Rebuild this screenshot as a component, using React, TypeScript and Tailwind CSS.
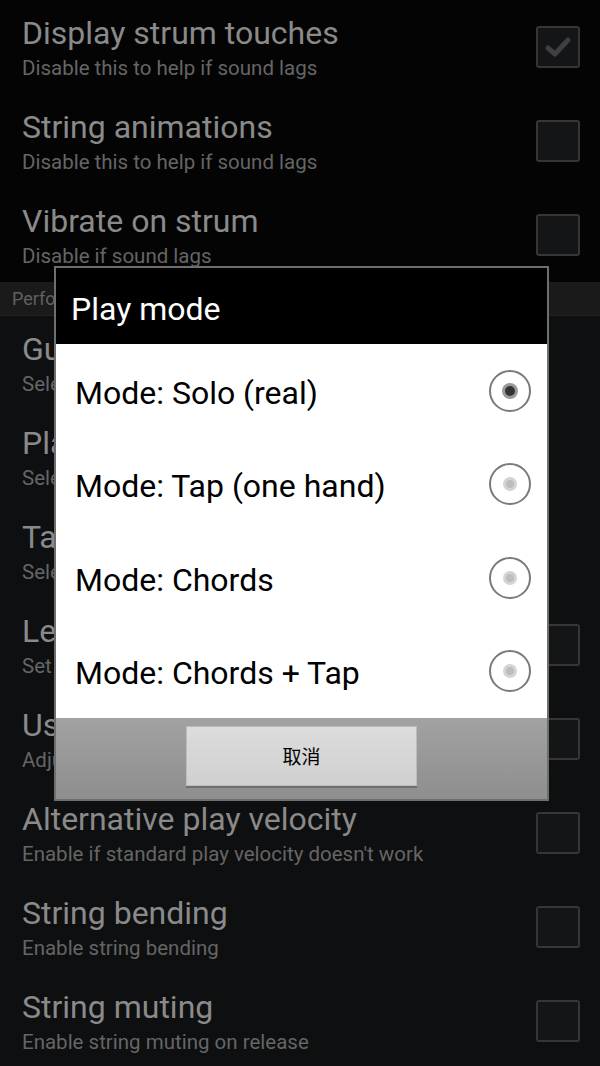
import React from "react";

type Row = { title: string; sub: string; check?: "on" | "off" | "none" };

const topRows: Row[] = [
  { title: "Display strum touches", sub: "Disable this to help if sound lags", check: "on" },
  { title: "String animations", sub: "Disable this to help if sound lags", check: "off" },
  { title: "Vibrate on strum", sub: "Disable if sound lags", check: "off" },
];

const bottomRows: Row[] = [
  { title: "Guitar sound", sub: "Select guitar sound", check: "none" },
  { title: "Play mode", sub: "Select play mode", check: "none" },
  { title: "Tap mode", sub: "Select tap mode", check: "none" },
  { title: "Left handed", sub: "Set left handed mode", check: "off" },
  { title: "Use volume", sub: "Adjust play velocity", check: "off" },
  { title: "Alternative play velocity", sub: "Enable if standard play velocity doesn't work", check: "off" },
  { title: "String bending", sub: "Enable string bending", check: "off" },
  { title: "String muting", sub: "Enable string muting on release", check: "off" },
];

function Checkbox({ on }: { on: boolean }) {
  return (
    <div className="w-[44px] h-[42px] rounded-[3px] border-2 border-[#363636] bg-[#141516] flex items-center justify-center">
      {on && (
        <svg width="28" height="24" viewBox="0 0 28 24">
          <path d="M4 13 L11 19 L24 5" stroke="#3f3f3f" strokeWidth="5" fill="none" strokeLinecap="round" strokeLinejoin="round" />
        </svg>
      )}
    </div>
  );
}

function PrefRow({ r }: { r: Row }) {
  return (
    <div className="h-[94px] flex items-center pl-[22px] pr-[20px]">
      <div className="flex-1 flex flex-col pt-[1px]">
        <div className="text-[32px] leading-[36px] text-[#8a8a8a] whitespace-nowrap">{r.title}</div>
        <div className="text-[20.5px] leading-[26px] mt-[4px] text-[#656565] whitespace-nowrap">{r.sub}</div>
      </div>
      {r.check !== "none" && <Checkbox on={r.check === "on"} />}
    </div>
  );
}

function Radio({ selected }: { selected: boolean }) {
  return (
    <div className="w-[42px] h-[42px] rounded-full border-2 border-[#7a7a7a] bg-white flex items-center justify-center">
      {selected ? (
        <div className="w-[16px] h-[16px] rounded-full bg-[#9a9a9a] flex items-center justify-center">
          <div className="w-[10px] h-[10px] rounded-full bg-[#333]" />
        </div>
      ) : (
        <div className="w-[14px] h-[14px] rounded-full bg-[#d4d4d4] flex items-center justify-center">
          <div className="w-[8px] h-[8px] rounded-full bg-[#bdbdbd]" />
        </div>
      )}
    </div>
  );
}

const modes = ["Mode: Solo (real)", "Mode: Tap (one hand)", "Mode: Chords", "Mode: Chords + Tap"];

export default function App() {
  return (
    <div
      className="relative w-[600px] h-[1066px] overflow-hidden bg-[#0e0f10]"
      style={{ fontFamily: "Roboto, 'Noto Sans', sans-serif" }}
    >
      <div className="bg-[#040404]">
        {topRows.map((r) => (
          <PrefRow key={r.title} r={r} />
        ))}
      </div>
      <div className="h-[34px] bg-[#1a1a1b] flex items-center pl-[12px] border-b border-[#222]">
        <span className="text-[18px] text-[#616161]">Performance</span>
      </div>
      <div>
        {bottomRows.map((r) => (
          <PrefRow key={r.title} r={r} />
        ))}
      </div>

      {/* Dialog */}
      <div className="absolute left-[54px] top-[266px] w-[495px] h-[535px] border-2 border-[#6e6e6e] bg-black flex flex-col">
        <div className="h-[76px] bg-black flex items-center pl-[15px]">
          <span className="text-[32px] text-white leading-none pt-[6px]">Play mode</span>
        </div>
        <div className="bg-white flex flex-col">
          {modes.map((m, i) => (
            <div key={m} className="h-[93.5px] flex items-center pl-[19px] pr-[16px]">
              <span className="flex-1 text-[32px] text-black pt-[4px]">{m}</span>
              <Radio selected={i === 0} />
            </div>
          ))}
        </div>
        <div className="flex-1 bg-gradient-to-b from-[#a2a2a2] to-[#8e8e8e] flex justify-center pt-[8px]">
          <div className="w-[231px] h-[60px] bg-gradient-to-b from-[#dcdcdc] to-[#d0d0d0] border border-[#bcbcbc] shadow-[0_2px_0_#6e6e6e] flex items-center justify-center">
            <span
              className="text-[19px] text-black"
              style={{ fontFamily: "'Noto Sans CJK SC', sans-serif" }}
            >
              取消
            </span>
          </div>
        </div>
      </div>
    </div>
  );
}
